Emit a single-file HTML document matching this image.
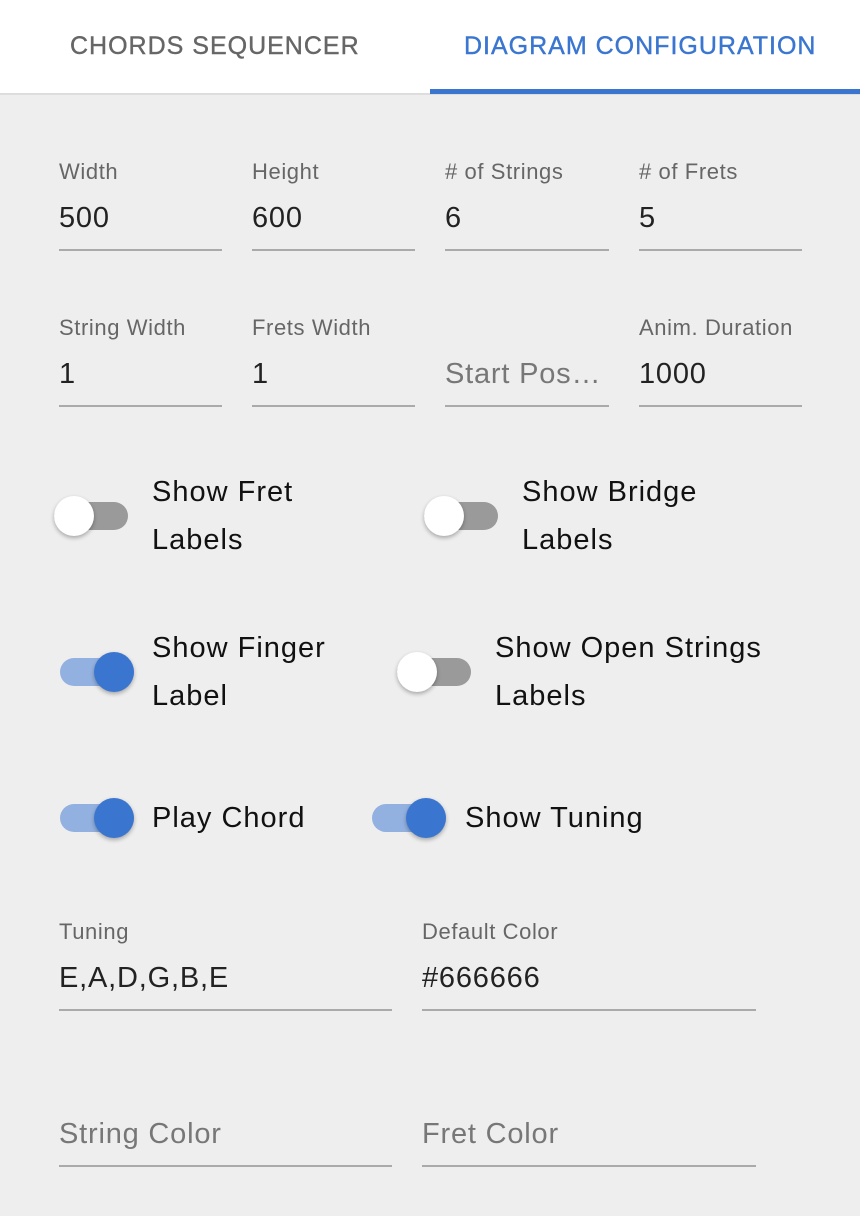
<!DOCTYPE html>
<html><head><style>
*{margin:0;padding:0;box-sizing:border-box}
body{width:860px;height:1216px;background:#eeeeee;font-family:"Liberation Sans",Arial,sans-serif;position:relative;overflow:hidden}
.hdr{position:absolute;left:0;top:0;width:860px;height:95px;background:#fff;border-bottom:2px solid #ddd}
.tab{position:absolute;top:32px;font-size:25px;letter-spacing:1px;color:#666;-webkit-text-stroke:0.4px #666}
.ul{position:absolute;left:430px;top:89px;width:430px;height:5px;background:#3a76d0}
.a{position:absolute;white-space:nowrap}
.lbl{font-size:22px;color:#666;letter-spacing:0.6px}
.val{font-size:29px;color:#222;letter-spacing:0.8px}
.ph{font-size:29px;color:#777;letter-spacing:0.8px}
.line{position:absolute;height:2px;background:#aaa}
.txt{font-size:29px;color:#111;line-height:48px;letter-spacing:1px}
.trk{position:absolute;width:74px;height:28px;border-radius:14px}
.th{position:absolute;width:40px;height:40px;border-radius:50%;box-shadow:0 2px 4px rgba(0,0,0,.3)}
</style></head><body>
<div class="hdr"></div>
<div class="tab" style="left:70px">CHORDS SEQUENCER</div>
<div class="tab" style="left:464px;color:#3a76d0;-webkit-text-stroke:0.4px #3a76d0">DIAGRAM CONFIGURATION</div>
<div class="ul"></div>

<div class="a lbl" style="left:59px;top:159px">Width</div>
<div class="a lbl" style="left:252px;top:159px">Height</div>
<div class="a lbl" style="left:445px;top:159px"># of Strings</div>
<div class="a lbl" style="left:639px;top:159px"># of Frets</div>
<div class="a val" style="left:59px;top:202px">500</div>
<div class="a val" style="left:252px;top:202px">600</div>
<div class="a val" style="left:445px;top:202px">6</div>
<div class="a val" style="left:639px;top:202px">5</div>
<div class="line" style="left:59px;top:249px;width:163px"></div>
<div class="line" style="left:252px;top:249px;width:163px"></div>
<div class="line" style="left:445px;top:249px;width:164px"></div>
<div class="line" style="left:639px;top:249px;width:163px"></div>

<div class="a lbl" style="left:59px;top:315px">String Width</div>
<div class="a lbl" style="left:252px;top:315px">Frets Width</div>
<div class="a lbl" style="left:639px;top:315px">Anim. Duration</div>
<div class="a val" style="left:59px;top:358px">1</div>
<div class="a val" style="left:252px;top:358px">1</div>
<div class="a ph" style="left:445px;top:358px">Start Pos…</div>
<div class="a val" style="left:639px;top:358px">1000</div>
<div class="line" style="left:59px;top:405px;width:163px"></div>
<div class="line" style="left:252px;top:405px;width:163px"></div>
<div class="line" style="left:445px;top:405px;width:164px"></div>
<div class="line" style="left:639px;top:405px;width:163px"></div>

<div class="trk" style="left:54px;top:502px;background:#9a9a9a"></div>
<div class="th" style="left:54px;top:496px;background:#fff"></div>
<div class="a txt" style="left:152px;top:468px">Show Fret<br>Labels</div>
<div class="trk" style="left:424px;top:502px;background:#9a9a9a"></div>
<div class="th" style="left:424px;top:496px;background:#fff"></div>
<div class="a txt" style="left:522px;top:468px">Show Bridge<br>Labels</div>

<div class="trk" style="left:60px;top:658px;background:#93b1e0"></div>
<div class="th" style="left:94px;top:652px;background:#3a76d0"></div>
<div class="a txt" style="left:152px;top:624px">Show Finger<br>Label</div>
<div class="trk" style="left:397px;top:658px;background:#9a9a9a"></div>
<div class="th" style="left:397px;top:652px;background:#fff"></div>
<div class="a txt" style="left:495px;top:624px">Show Open Strings<br>Labels</div>

<div class="trk" style="left:60px;top:804px;background:#93b1e0"></div>
<div class="th" style="left:94px;top:798px;background:#3a76d0"></div>
<div class="a txt" style="left:152px;top:794px">Play Chord</div>
<div class="trk" style="left:372px;top:804px;background:#93b1e0"></div>
<div class="th" style="left:406px;top:798px;background:#3a76d0"></div>
<div class="a txt" style="left:465px;top:794px">Show Tuning</div>

<div class="a lbl" style="left:59px;top:919px">Tuning</div>
<div class="a lbl" style="left:422px;top:919px">Default Color</div>
<div class="a val" style="left:59px;top:962px">E,A,D,G,B,E</div>
<div class="a val" style="left:422px;top:962px">#666666</div>
<div class="line" style="left:59px;top:1009px;width:333px"></div>
<div class="line" style="left:422px;top:1009px;width:334px"></div>

<div class="a ph" style="left:59px;top:1118px">String Color</div>
<div class="a ph" style="left:422px;top:1118px">Fret Color</div>
<div class="line" style="left:59px;top:1165px;width:333px"></div>
<div class="line" style="left:422px;top:1165px;width:334px"></div>
</body></html>
